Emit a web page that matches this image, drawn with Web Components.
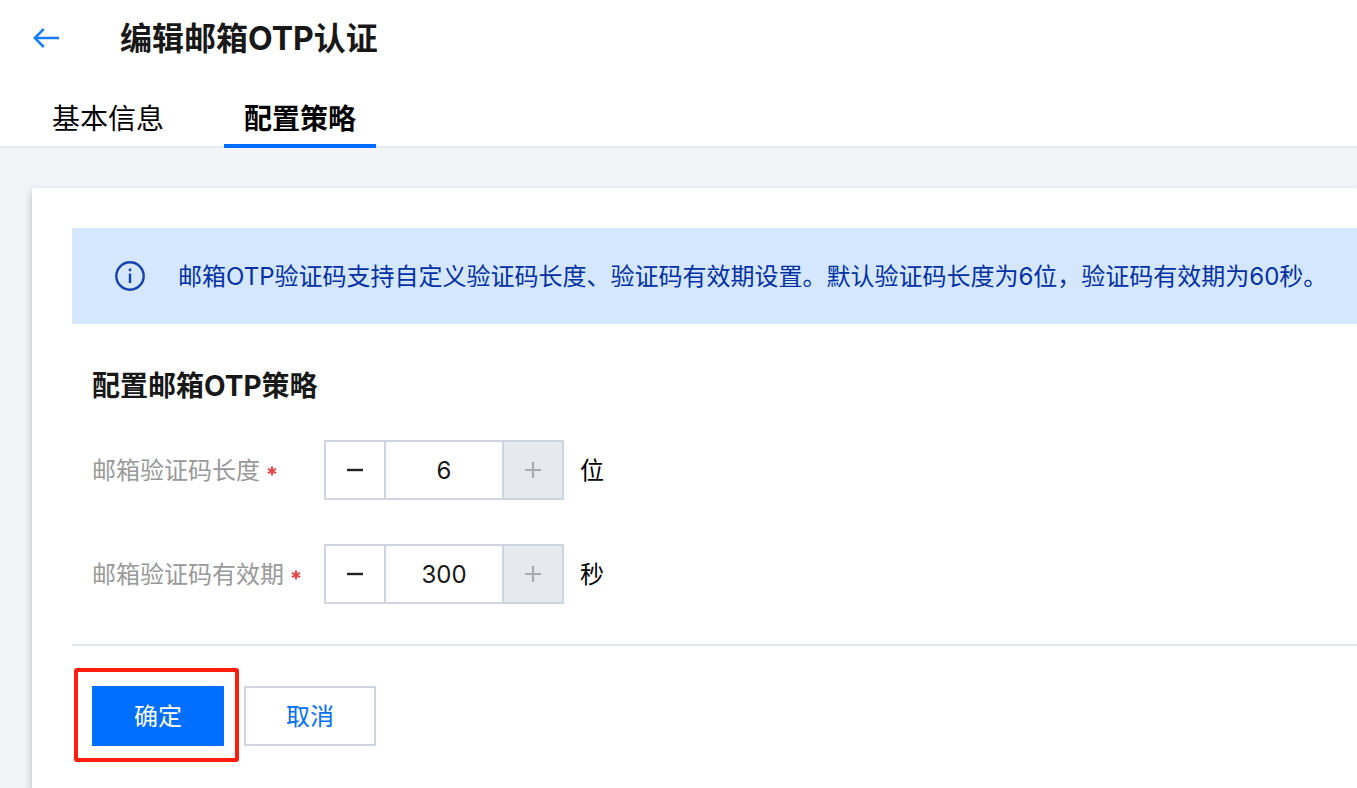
<!DOCTYPE html>
<html lang="zh-CN">
<head>
<meta charset="utf-8">
<meta name="viewport" content="width=device-width, initial-scale=1">
<title>编辑邮箱OTP认证</title>
<style>
  html, body { margin: 0; }
  body {
    --blue: #006eff;
    --line: #cfd5de;
    --rule: #e5e8ed;
    min-height: 100vh;
    background: #f3f4f7;
    color: #000;
    font: 24px/36px Inter, "Noto Sans CJK SC", sans-serif;
    overflow: hidden;
  }
</style>
</head>
<body>
<otp-page></otp-page>

<script>
function define(name, html, setup) {
  const template = document.createElement('template');
  template.innerHTML = html;
  customElements.define(name, class extends HTMLElement {
    constructor() {
      super();
      this.attachShadow({ mode: 'open' }).append(template.content.cloneNode(true));
    }
    connectedCallback() {
      if (setup) setup(this, this.shadowRoot);
    }
  });
}

define('page-header', `
  <style>
    :host { display: flex; align-items: center; gap: 60px; height: 76px; padding: 0 32px; }
    a { display: flex; color: var(--blue); }
    svg { display: block; }
    h1 { margin: 0; padding-top: 2px; font-size: 32px; line-height: 48px; font-weight: 700; color: #181818; }
  </style>
  <a href="#back" aria-label="返回">
    <svg width="28" height="24" viewBox="0 0 28 24" fill="none" stroke="currentColor" stroke-width="2.5" opacity=".9">
      <path d="M27 12H3M11.8 3L2.8 12l9 9"/>
    </svg>
  </a>
  <h1><slot></slot></h1>`);

define('tab-bar', `
  <style>
    :host { display: flex; gap: 40px; height: 72px; padding: 0 32px; box-sizing: border-box;
            box-shadow: inset 0 -2px var(--rule); }
  </style>
  <slot></slot>`);

define('tab-link', `
  <style>
    :host { display: block; }
    a { display: block; box-sizing: border-box; height: 72px; padding: 20px 20px 0;
        font-size: 28px; line-height: 46px; color: #000; text-decoration: none;
        border-bottom: 4px solid transparent; }
    :host([active]) a { font-weight: 700; border-color: var(--blue); }
  </style>
  <a href="#tab"><slot></slot></a>`);

define('info-banner', `
  <style>
    :host { display: flex; align-items: center; gap: 32px; min-height: 96px; padding: 0 42px;
            background: #d5e7ff; color: #0030a5; white-space: nowrap; }
    svg { display: block; flex: none; }
    p { margin: 0; padding-top: 2px; }
  </style>
  <svg width="32" height="32" viewBox="0 0 32 32" fill="none" stroke="currentColor" stroke-width="2.4" opacity=".9">
    <circle cx="16" cy="16" r="13.7"/>
    <path d="M16 13.5V23M16 8.6v2.6"/>
  </svg>
  <p><slot></slot></p>`);

define('number-field', `
  <style>
    :host { display: grid; grid-template-columns: 232px 240px auto; align-items: center;
            justify-content: start; }
    label { display: flex; align-items: center; gap: 6px; padding-top: 2px; color: #999; }
    .star { color: #e54545; }
    .star svg { display: block; }
    .stepper { display: grid; grid-template-columns: 58px 1fr 58px; height: 60px;
               box-sizing: border-box; border: 2px solid var(--line); }
    button { display: grid; place-items: center; padding: 0; border: 0; background: #fff; color: #222; }
    button:disabled { background: #e6e9ee; color: #000; }
    button:disabled svg { opacity: .26; }
    input { min-width: 0; margin: 0; padding: 2px 0 0; border: solid var(--line); border-width: 0 2px;
            border-radius: 0; outline: 0; background: #fff; color: #181818;
            font: inherit; text-align: center; }
    .unit { padding: 2px 0 0 16px; }
  </style>
  <label for="value"><slot></slot>
    <span class="star"><svg width="12" height="12" viewBox="0 0 12 12" fill="none" stroke="currentColor" stroke-width="2">
      <path d="M6 1.5v9M2 3.8l8 4.4M10 3.8L2 8.2"/></svg></span>
  </label>
  <div class="stepper">
    <button type="button" aria-label="减少"><svg width="16" height="16" viewBox="0 0 16 16"><path d="M0 6.8h16v2.4H0z" fill="currentColor"/></svg></button>
    <input id="value" type="text" inputmode="numeric" required>
    <button type="button" aria-label="增加" disabled><svg width="16" height="16" viewBox="0 0 16 16" fill="none" stroke="currentColor" stroke-width="2.2"><path d="M0 8h16M8 0v16"/></svg></button>
  </div>
  <span class="unit"></span>`,
  (host, root) => {
    root.querySelector('input').value = host.getAttribute('value');
    root.querySelector('.unit').textContent = host.getAttribute('unit');
  });

define('action-button', `
  <style>
    :host { display: block; position: relative; }
    button { display: block; box-sizing: border-box; min-width: 132px; height: 60px; padding: 2px 40px 0;
             border: 2px solid var(--line); border-radius: 0; background: #fff; color: var(--blue);
             font: inherit; }
    :host([primary]) button { border-color: var(--blue); background: var(--blue); color: #fff; }
    :host([marked])::after { content: ""; position: absolute; inset: -18px -15px -16px -18px;
             border: 4px solid #ff1d0d; border-radius: 3px; pointer-events: none; }
  </style>
  <button type="button"><slot></slot></button>`);

define('content-card', `
  <style>
    :host { display: block; margin: 40px 0 0 32px; padding: 40px 0 42px 40px; min-height: calc(100vh - 188px);
            box-sizing: border-box; background: #fff; box-shadow: 0 4px 8px rgba(54, 58, 80, .32); }
  </style>
  <slot></slot>`);

define('otp-page', `
  <style>
    :host { display: block; }
    header { background: #fff; }
    h2 { margin: 0; font-size: 28px; line-height: 44px; font-weight: 700; color: #181818; }
    .form { display: grid; gap: 32px; padding: 40px 20px; border-bottom: 2px solid var(--rule); }
    .fields { display: grid; gap: 44px; }
    .actions { display: flex; gap: 20px; padding: 40px 20px 0; }
  </style>
  <header>
    <page-header>编辑邮箱OTP认证</page-header>
    <tab-bar>
      <tab-link>基本信息</tab-link>
      <tab-link active>配置策略</tab-link>
    </tab-bar>
  </header>
  <main>
    <content-card>
      <info-banner>邮箱OTP验证码支持自定义验证码长度、验证码有效期设置。默认验证码长度为6位，验证码有效期为60秒。</info-banner>
      <div class="form">
        <h2>配置邮箱OTP策略</h2>
        <div class="fields">
          <number-field value="6" unit="位">邮箱验证码长度</number-field>
          <number-field value="300" unit="秒">邮箱验证码有效期</number-field>
        </div>
      </div>
      <div class="actions">
        <action-button primary marked>确定</action-button>
        <action-button>取消</action-button>
      </div>
    </content-card>
  </main>`);
</script>
</body>
</html>
